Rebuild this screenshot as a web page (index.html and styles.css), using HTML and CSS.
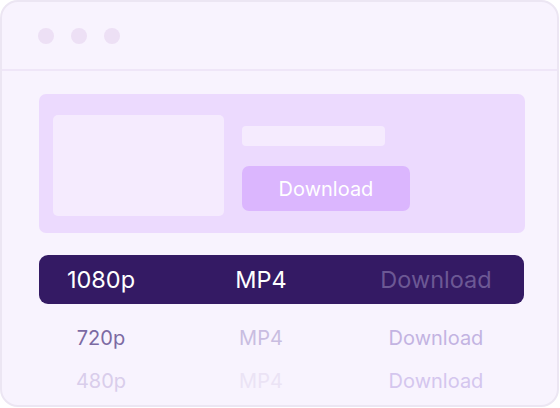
FILE: index.html
```html
<!DOCTYPE html>
<html lang="en">

<head>
    <meta charset="UTF-8">
    <title>Video Downloader</title>
    <link rel="stylesheet" href="styles.css">
</head>

<body>
    <!-- Browser window -->
    <div class="window">
        <div class="window-bar">
            <span class="dot"></span>
            <span class="dot"></span>
            <span class="dot"></span>
        </div>

        <div class="window-body">
            <!-- Video preview card -->
            <div class="preview">
                <div class="thumb"></div>
                <div class="preview-side">
                    <div class="title-bar"></div>
                    <button class="download-btn">Download</button>
                </div>
            </div>

            <!-- Quality list -->
            <div class="quality-list">
                <div class="quality active">
                    <span class="res">1080p</span>
                    <span class="format">MP4</span>
                    <span class="action">Download</span>
                </div>
                <div class="quality second">
                    <span class="res">720p</span>
                    <span class="format">MP4</span>
                    <span class="action">Download</span>
                </div>
                <div class="quality third">
                    <span class="res">480p</span>
                    <span class="format">MP4</span>
                    <span class="action">Download</span>
                </div>
            </div>
        </div>
    </div>
</body>

</html>
```

FILE: styles.css
```css
/* General Reset */
* {
    margin: 0;
    padding: 0;
    box-sizing: border-box;
    font-family: 'Inter', 'Noto Sans', sans-serif;
}

body {
    background-color: #ffffff;
    width: 560px;
    height: 408px;
    overflow: hidden;
}

/* Window frame */
.window {
    width: 559px;
    height: 407px;
    background-color: #f8f3fe;
    border: 2px solid #ece6f3;
    border-radius: 18px;
    overflow: hidden;
}

.window-bar {
    height: 69px;
    display: flex;
    align-items: center;
    gap: 17px;
    padding-left: 36px;
    border-bottom: 2px solid #efe6f8;
}

.dot {
    width: 16px;
    height: 16px;
    border-radius: 50%;
    background-color: #ede0f5;
}

.window-body {
    padding: 23px 33px 0 37px;
}

/* Preview card */
.preview {
    width: 486px;
    height: 139px;
    background-color: #ecdafe;
    border-radius: 7px;
    display: flex;
    padding: 21px 14px 0 14px;
    gap: 18px;
}

.thumb {
    width: 171px;
    height: 101px;
    background-color: #f5ebfe;
    border-radius: 5px;
}

.preview-side {
    padding-top: 11px;
}

.title-bar {
    width: 143px;
    height: 20px;
    background-color: #f5ebfe;
    border-radius: 4px;
    margin-bottom: 20px;
}

.download-btn {
    width: 168px;
    height: 45px;
    border: none;
    border-radius: 7px;
    background-color: #dbb6fe;
    color: #ffffff;
    font-size: 20px;
    font-weight: 400;
}

/* Quality rows */
.quality-list {
    margin-top: 22px;
}

.quality {
    width: 485px;
    display: grid;
    grid-template-columns: 124px 196px 154px;
    align-items: center;
    text-align: center;
    height: 43px;
    font-size: 20px;
}

.quality.active {
    height: 49px;
    margin-bottom: 12px;
    background-color: #341a64;
    border-radius: 9px;
    font-size: 23.5px;
}

.active .res,
.active .format {
    color: #ffffff;
}

.active .action {
    color: #6c5894;
}

.second .res {
    color: #7c6aa3;
}

.second .format {
    color: #c9bde1;
}

.second .action {
    color: #c3b3e2;
}

.third .res {
    color: #d9cdeb;
}

.third .format {
    color: #ebe3f5;
}

.third .action {
    color: #d4c6ee;
}
```
